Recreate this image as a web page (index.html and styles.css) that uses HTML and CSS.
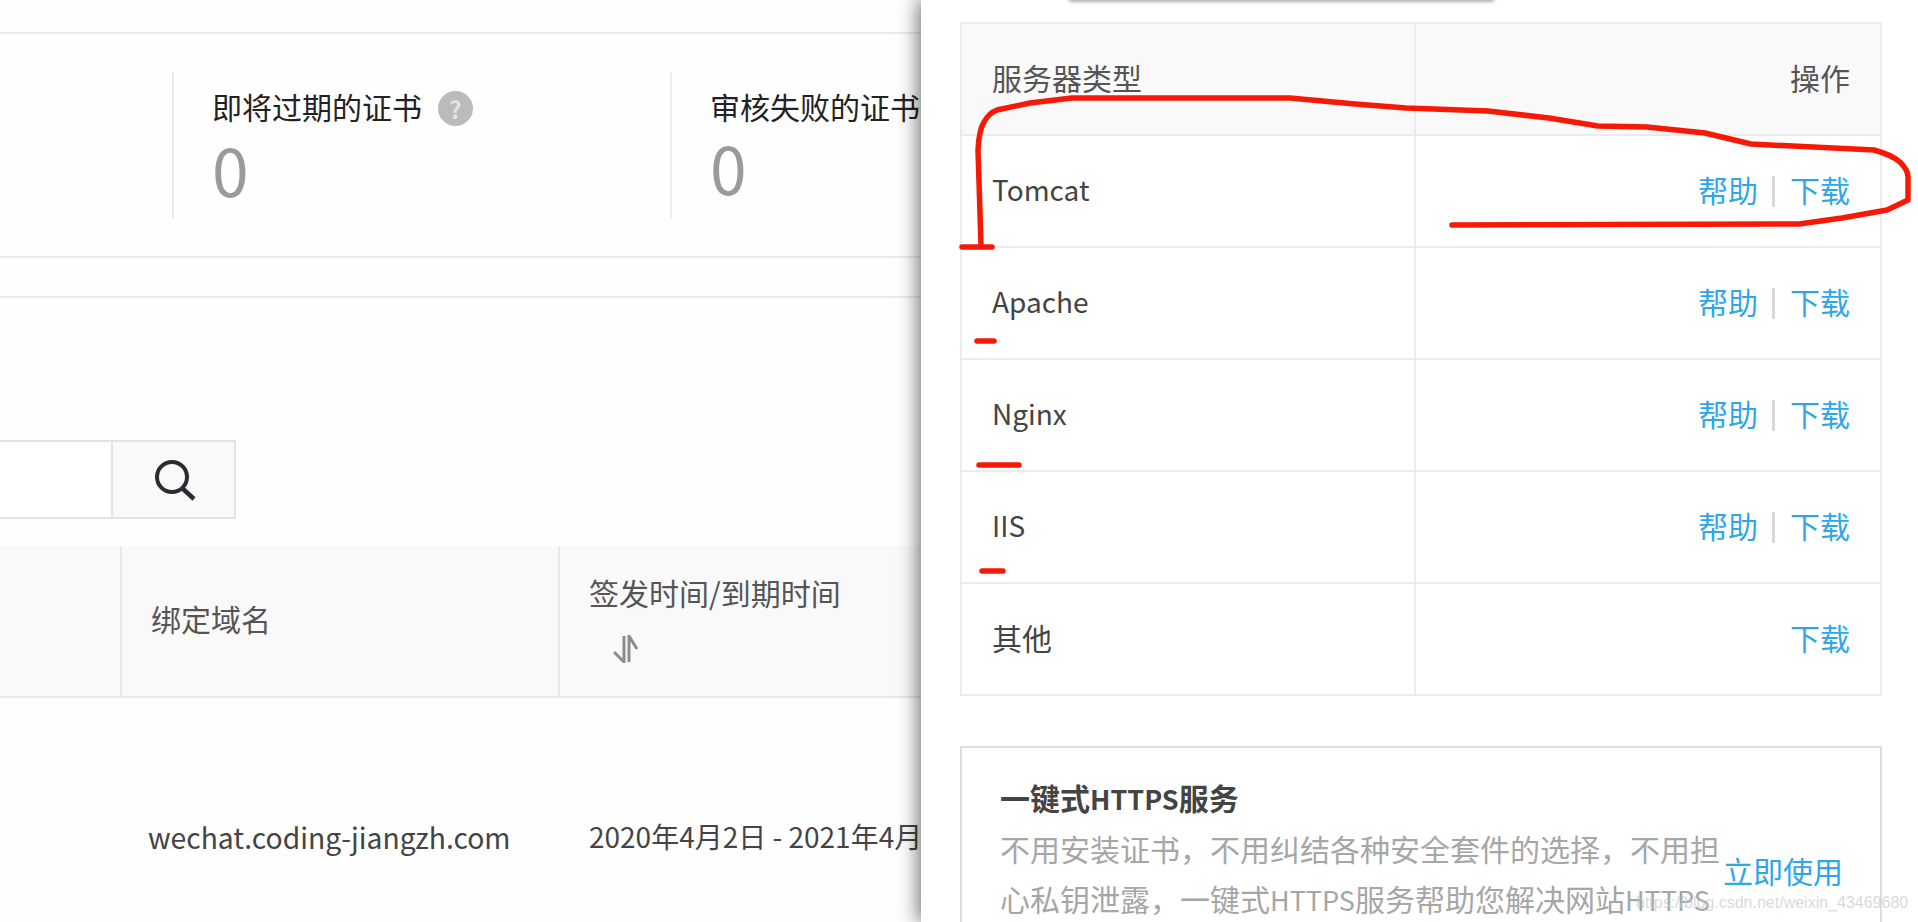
FILE: index.html
```html
<!DOCTYPE html>
<html lang="zh-CN">
<head>
<meta charset="utf-8">
<title>SSL证书</title>
<link rel="stylesheet" href="styles.css">
</head>
<body>
<div class="page">
  <main class="main">
    <div class="topband"></div>
    <section class="stats">
      <div class="stat">
        <div class="stat-label">即将过期的证书<span class="help">?</span></div>
        <div class="stat-value">0</div>
      </div>
      <div class="stat stat-alt">
        <div class="stat-label">审核失败的证书</div>
        <div class="stat-value">0</div>
      </div>
    </section>
    <div class="tabband"></div>
    <div class="search">
      <div class="search-input"></div>
      <button class="search-btn" type="button" aria-label="搜索">
        <svg width="44" height="44" viewBox="0 0 44 44"><circle cx="20" cy="19" r="15" fill="none" stroke="#2a2b33" stroke-width="4"/><path d="M30 30l12 11" fill="none" stroke="#2a2b33" stroke-width="4.5"/></svg>
      </button>
    </div>
    <div class="cert-table">
      <div class="th"></div>
      <div class="th th-plain">绑定域名</div>
      <div class="th th-sort">
        <span>签发时间/到期时间</span>
        <svg class="sort" width="26" height="28" viewBox="0 0 26 28"><path d="M11 1v26L1 17" fill="none" stroke="#8a8d90" stroke-width="3"/><path d="M16 27V1l8 13" fill="none" stroke="#8a8d90" stroke-width="3"/></svg>
      </div>
      <div class="td"></div>
      <div class="td domain">wechat.coding-jiangzh.com</div>
      <div class="td date">2020年4月2日 - 2021年4月2日</div>
    </div>
  </main>

  <aside class="panel">
    <div class="tooltip-edge"></div>
    <table class="servers">
      <thead>
        <tr><th>服务器类型</th><th class="right">操作</th></tr>
      </thead>
      <tbody>
        <tr><td class="latin">Tomcat</td><td class="right"><a>帮助</a><i class="sep"></i><a>下载</a></td></tr>
        <tr><td class="latin">Apache</td><td class="right"><a>帮助</a><i class="sep"></i><a>下载</a></td></tr>
        <tr><td class="latin">Nginx</td><td class="right"><a>帮助</a><i class="sep"></i><a>下载</a></td></tr>
        <tr><td class="latin">IIS</td><td class="right"><a>帮助</a><i class="sep"></i><a>下载</a></td></tr>
        <tr><td>其他</td><td class="right"><a>下载</a></td></tr>
      </tbody>
    </table>
    <section class="promo">
      <div class="promo-text">
        <h3>一键式<span class="abbr">HTTPS</span>服务</h3>
        <p>不用安装证书，不用纠结各种安全套件的选择，不用担<br>心私钥泄露，一键式<span class="abbr">HTTPS</span>服务帮助您解决网站<span class="abbr">HTTPS</span></p>
      </div>
      <a class="promo-link">立即使用</a>
    </section>
  </aside>

  <svg class="ink" width="1918" height="922" viewBox="0 0 1918 922" aria-hidden="true">
    <path class="stroke" d="M981 245L978 150Q979 130 984 122Q989 113 997 110L1030 103L1072 98H1290L1355 104L1406 108L1488 111L1549 118L1598 126L1647 127L1705 133L1751 144L1874 150Q1892 155 1900 162Q1908 170 1908 177V200L1887 210L1842 218L1799 224L1452 225"/>
    <path class="dash" d="M962 247H992"/>
    <path class="dash" d="M977 341H994"/>
    <path class="dash" d="M979 465H1019"/>
    <path class="dash" d="M982 571H1003"/>
  </svg>
  <div class="watermark">https://blog.csdn.net/weixin_43469680</div>
</div>
</body>
</html>
```
FILE: styles.css
```css
* { box-sizing: border-box; }
html, body { margin: 0; padding: 0; height: 100%; overflow: hidden; background: #fff; }
body { font-family: "Noto Sans CJK SC", "Noto Sans", sans-serif; font-size: 30px; color: #444; }
.page { position: relative; display: flex; width: 1918px; height: 922px; overflow: hidden; }

.main { width: 921px; flex: none; height: 922px; overflow: hidden; background: #fefefe; }
.topband { height: 34px; border-bottom: 2px solid #ebebeb; }
.stats { display: flex; padding-left: 172px; margin-top: 38px; height: 146px; }
.stat { width: 498px; flex: none; padding: 16px 0 0 38px; border-left: 2px solid #ebebeb; }
.stat-label { display: flex; align-items: center; height: 36px; color: #222; line-height: 36px; white-space: nowrap; }
.help { display: inline-flex; align-items: center; justify-content: center; width: 35px; height: 35px; margin-left: 16px; margin-top: 5px; border-radius: 50%; background: #bbb; color: #e4e4e4; font-size: 24px; font-weight: 700; line-height: 1; }
.stat-value { margin-top: 11px; color: #9a9a9a; font-size: 66px; line-height: 66px; }
.stat-alt .stat-value { margin-top: 9px; }
.tabband { height: 42px; margin-top: 38px; border-top: 2px solid #ebebeb; border-bottom: 2px solid #ebebeb; }
.search { display: flex; width: 236px; height: 79px; margin-top: 142px; border: 2px solid #e3e3e3; border-left: 0; }
.search-input { flex: 1; border-right: 2px solid #e3e3e3; background: #fff; }
.search-btn { display: flex; align-items: center; justify-content: center; width: 121px; flex: none; padding: 0; border: 0; background: #f9f9f9; }
.cert-table { display: grid; grid-template-columns: 120px 438px 1fr; grid-template-rows: 152px 280px; margin-top: 27px; }
.th { display: flex; align-items: center; padding-left: 29px; background: #f9f9fa; border-left: 2px solid #e8e8e8; border-bottom: 2px solid #e8e8e8; color: #555; white-space: nowrap; }
.th:first-child { border-left: 0; }
.th-plain { padding-bottom: 7px; }
.th-sort { flex-direction: column; align-items: flex-start; padding-top: 25px; justify-content: flex-start; line-height: 42px; }
.sort { display: block; margin: 22px 0 0 24px; }
.td { display: flex; align-items: center; padding: 0 0 4px 28px; white-space: nowrap; color: #444; font-size: 28.3px; height: 280px; }
.date { padding-left: 31px; font-size: 28px; }

.panel { position: relative; z-index: 2; flex: none; width: 997px; height: 922px; padding: 22px 36px 0 39px; background: #fff; box-shadow: -3px 0 18px rgba(0, 0, 0, .55); overflow: visible; }
.tooltip-edge { position: absolute; left: 148px; top: -10px; width: 425px; height: 10px; background: #fff; box-shadow: 0 1px 4px rgba(0, 0, 0, .45); }
.servers { width: 922px; border-collapse: collapse; table-layout: fixed; }
.servers th, .servers td { height: 112px; padding: 0 30px 5px; border: 2px solid #ebebeb; font-weight: 400; text-align: left; white-space: nowrap; }
.servers th { background: #f9f9f9; color: #555; }
.servers th:first-child, .servers td:first-child { width: 454px; }
.servers .right { text-align: right; }
.servers td.latin { font-size: 28px; }
.servers a { color: #2ea7e8; }
.sep { display: inline-block; width: 3px; height: 31px; margin: 0 15px 0 14px; background: #d8d8d8; vertical-align: -5px; }
.promo { display: flex; margin-top: 50px; padding: 29px 0 0 38px; height: 260px; width: 922px; border: 2px solid #ddd; }
.promo-text { width: 724px; flex: none; }
.promo h3 { margin: 0; color: #444; font-size: 30px; line-height: 40px; font-weight: 700; }
.promo p { margin: 4px 0 0; color: #a6a6a6; font-size: 30px; line-height: 50px; white-space: nowrap; }
.abbr { font-size: 27px; }
.promo-link { margin-top: 73px; margin-left: -1px; color: #2ea7e8; white-space: nowrap; line-height: 40px; }

.ink { position: absolute; left: 0; top: 0; z-index: 3; pointer-events: none; }
.ink path { fill: none; stroke: #f61a06; stroke-linecap: round; stroke-linejoin: round; }
.ink .stroke { stroke-width: 5.5; }
.ink .dash { stroke-width: 5.5; }
.watermark { position: absolute; left: 1636px; top: 893px; z-index: 4; color: rgba(200, 200, 200, .7); font-family: "Liberation Sans", sans-serif; font-size: 16px; line-height: 20px; white-space: nowrap; }
```
